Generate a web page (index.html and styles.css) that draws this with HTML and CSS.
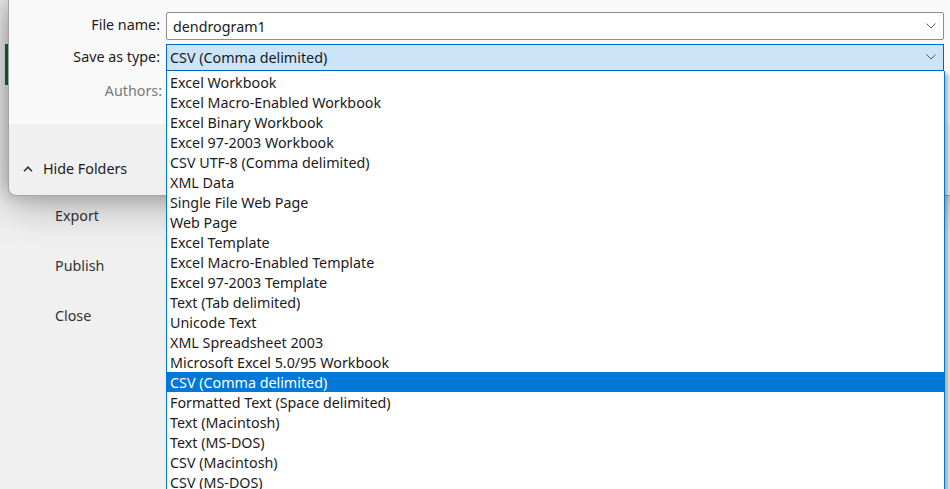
FILE: index.html
```html
<!DOCTYPE html>
<html lang="en">
<head>
<meta charset="utf-8">
<title>Save As</title>
<link rel="stylesheet" href="styles.css">
</head>
<body>
<div class="backstage">
  <nav class="nav">
    <div class="nav-selected"></div>
    <div class="nav-item first">Export</div>
    <div class="nav-item">Publish</div>
    <div class="nav-item">Close</div>
  </nav>
  <main class="content"></main>
</div>

<div class="dialog">
  <div class="dialog-body">
    <div class="form">
      <label class="label">File name:</label>
      <div class="field input">
        <span class="field-text">dendrogram1</span>
        <svg class="chev" width="10" height="6" viewBox="0 0 10 6"><path d="M0.5 0.5 L5 5 L9.5 0.5" fill="none" stroke="#5a5a5a" stroke-width="1"/></svg>
      </div>
      <label class="label">Save as type:</label>
      <div class="field select">
        <span class="field-text">CSV (Comma delimited)</span>
        <svg class="chev" width="10" height="6" viewBox="0 0 10 6"><path d="M0.5 0.5 L5 5 L9.5 0.5" fill="none" stroke="#5a5a5a" stroke-width="1"/></svg>
      </div>
      <label class="label muted">Authors:</label>
      <div class="field plain"></div>
    </div>
  </div>
  <div class="dialog-footer">
    <button class="hide-folders">
      <svg width="10" height="6" viewBox="0 0 10 6"><path d="M1 5.2 L5 1.2 L9 5.2" fill="none" stroke="#333" stroke-width="1.6"/></svg>
      <span>Hide Folders</span>
    </button>
  </div>
</div>

<ul class="listbox">
  <li>Excel Workbook</li>
  <li>Excel Macro-Enabled Workbook</li>
  <li>Excel Binary Workbook</li>
  <li>Excel 97-2003 Workbook</li>
  <li>CSV UTF-8 (Comma delimited)</li>
  <li>XML Data</li>
  <li>Single File Web Page</li>
  <li>Web Page</li>
  <li>Excel Template</li>
  <li>Excel Macro-Enabled Template</li>
  <li>Excel 97-2003 Template</li>
  <li>Text (Tab delimited)</li>
  <li>Unicode Text</li>
  <li>XML Spreadsheet 2003</li>
  <li>Microsoft Excel 5.0/95 Workbook</li>
  <li class="selected">CSV (Comma delimited)</li>
  <li>Formatted Text (Space delimited)</li>
  <li>Text (Macintosh)</li>
  <li>Text (MS-DOS)</li>
  <li>CSV (Macintosh)</li>
  <li>CSV (MS-DOS)</li>
</ul>
</body>
</html>
```

FILE: styles.css
```css
html, body {
  margin: 0;
  padding: 0;
  width: 950px;
  height: 489px;
  overflow: hidden;
}
body {
  font-family: "Noto Sans", "Open Sans", sans-serif;
  font-size: 14.3px;
  color: #1b1b1b;
  background: #f0f0f0;
  position: relative;
}

/* Backstage */
.backstage {
  display: flex;
  height: 489px;
}
.nav {
  width: 180px;
  display: flex;
  flex-direction: column;
}
.nav-selected {
  margin: 44px 0 0 5px;
  width: 3px;
  height: 41px;
  background: #17683e;
}
.nav-item {
  height: 50px;
  line-height: 50px;
  padding-left: 55px;
  color: #333;
}
.nav-item.first {
  margin-top: 106px;
}
.content {
  flex: 1;
}

/* Dialog */
.dialog {
  position: absolute;
  left: 8px;
  right: 0;
  top: -1px;
  height: 195px;
  border: 1px solid #a6a6a6;
  border-right: none;
  border-radius: 0 0 0 8px;
  background: #f0f0f0;
  box-shadow: 0 10px 40px rgba(0, 0, 0, 0.28), -4px 0 18px rgba(0, 0, 0, 0.2);
  display: flex;
  flex-direction: column;
  overflow: hidden;
}
.dialog-body {
  height: 124px;
  background: #f9f9f9;
}
.form {
  display: grid;
  grid-template-columns: 151px 778px;
  grid-template-rows: 28px 28px 32px;
  row-gap: 4px;
  column-gap: 6px;
  padding-top: 12px;
  align-items: center;
}
.label {
  text-align: right;
  color: #1b1b1b;
  line-height: 28px;
  position: relative;
  top: -1px;
}
.label.muted {
  color: #7a7a7a;
  left: 2px;
}
.field {
  height: 28px;
  box-sizing: border-box;
  display: flex;
  align-items: center;
  justify-content: space-between;
}
.input {
  background: #fff;
  border: 1px solid #8d8d8d;
  border-radius: 2px;
  padding: 0 6px 0 6px;
}
.select {
  background: #cce4f7;
  border: 1px solid #0067c0;
  border-bottom-width: 2px;
  padding: 0 6px 1px 3px;
}
.plain {
  border: none;
}
.chev {
  margin-right: 1px;
}

.dialog-footer {
  flex: 1;
  display: flex;
  align-items: flex-start;
}
.hide-folders {
  margin-top: 35px;
  margin-left: 14px;
  background: none;
  border: none;
  padding: 0;
  font: inherit;
  color: #1b1b1b;
  display: flex;
  align-items: center;
  gap: 10px;
}

/* Dropdown list */
.listbox {
  position: absolute;
  left: 166px;
  top: 71px;
  width: 779px;
  box-sizing: border-box;
  margin: 0;
  padding: 1px 0 0 0;
  list-style: none;
  background: #fff;
  border: 1px solid #0078d4;
  border-top: none;
  box-shadow: 3px 3px 4px rgba(0, 0, 0, 0.3);
}
.listbox li {
  height: 20px;
  line-height: 21px;
  padding-left: 3px;
  white-space: nowrap;
  color: #1b1b1b;
}
.listbox li.selected {
  background: #0078d7;
  color: #fff;
}
```
